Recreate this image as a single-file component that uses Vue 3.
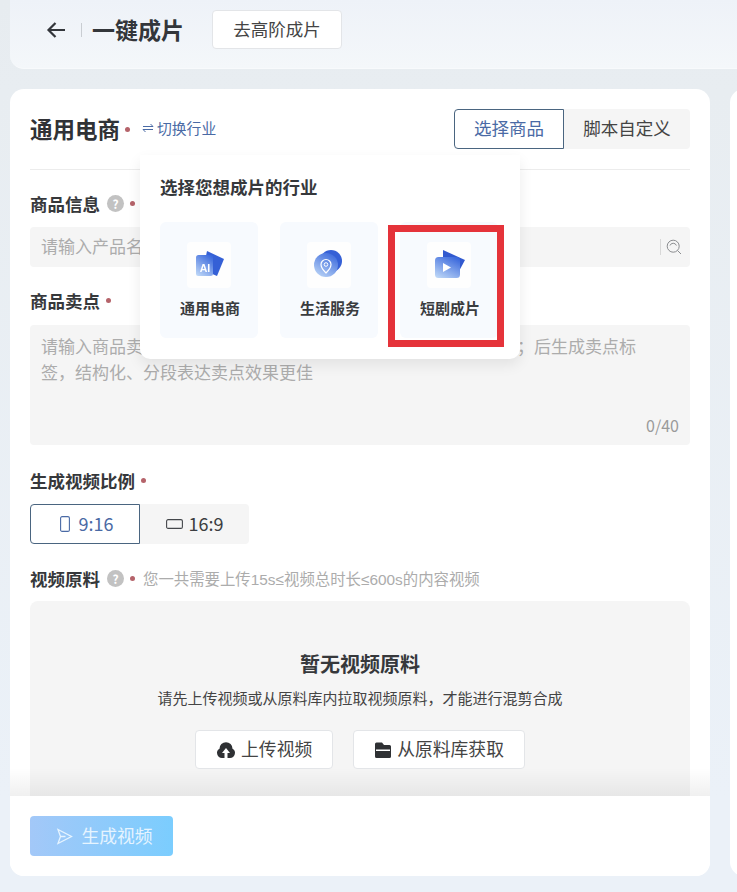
<script setup>
const tiles = [
  { name: '通用电商', type: 'ai' },
  { name: '生活服务', type: 'pin' },
  { name: '短剧成片', type: 'play', marked: true },
]
</script>

<template>
  <div class="page">
    <header class="topbar">
      <svg class="back" width="20" height="18" viewBox="0 0 20 18" fill="none" stroke="#33363b" stroke-width="2.2">
        <path d="M19 9H2.5M9.5 2 2.5 9l7 7" />
      </svg>
      <i class="sep"></i>
      <h1>一键成片</h1>
      <button class="plain-btn">去高阶成片</button>
    </header>

    <main class="columns">
      <section class="card">
        <div class="scroll">
          <div class="card-head">
            <h2>通用电商</h2>
            <i class="dot"></i>
            <span class="switch">
              <svg width="12" height="10" viewBox="0 0 12 10" fill="none" stroke="#4a6aa5" stroke-width="1">
                <path d="M1 3.5h10L8.500 1M11 6.500H1L3.500 9" />
              </svg>
              切换行业
            </span>
            <div class="tabs">
              <span class="tab active">选择商品</span>
              <span class="tab">脚本自定义</span>
            </div>
          </div>

          <div class="label info">
            商品信息
            <i class="help">?</i>
            <i class="dot"></i>
          </div>
          <div class="input">
            <span class="ph">请输入产品名称</span>
            <i class="input-sep"></i>
            <svg width="16" height="16" viewBox="0 0 16 16" fill="none" stroke="#8b8d90" stroke-width="1">
              <circle cx="7.200" cy="7.200" r="6" />
              <path d="M4 6.500a3.400 3.400 0 0 1 6.400 0M11.500 11.500 15 15" />
            </svg>
          </div>

          <div class="label selling">商品卖点<i class="dot"></i></div>
          <div class="textarea">
            <div class="ph">请输入商品卖点，建议每个卖点之间用中文分号隔开，使用分号；后生成卖点标<br />签，结构化、分段表达卖点效果更佳</div>
            <span class="count">0/40</span>
          </div>

          <div class="label ratio-label">生成视频比例<i class="dot"></i></div>
          <div class="ratio">
            <span class="ratio-item active">
              <svg width="10" height="16" viewBox="0 0 10 16" fill="none" stroke="#4a6aa5" stroke-width="1.100">
                <rect x="0.600" y="0.600" width="8.800" height="14.800" rx="1.500" />
              </svg>
              <span class="ratio-text">9:16</span>
            </span>
            <span class="ratio-item">
              <svg width="17" height="10" viewBox="0 0 17 10" fill="none" stroke="#44474b" stroke-width="1.100">
                <rect x="0.600" y="0.600" width="15.800" height="8.800" rx="1.500" />
              </svg>
              <span class="ratio-text">16:9</span>
            </span>
          </div>

          <div class="label material-label">
            视频原料
            <i class="help">?</i>
            <i class="dot"></i>
            <span class="hint">您一共需要上传15s≤视频总时长≤600s的内容视频</span>
          </div>
          <div class="material">
            <h3>暂无视频原料</h3>
            <p>请先上传视频或从原料库内拉取视频原料，才能进行混剪合成</p>
            <div class="material-btns">
              <button class="plain-btn small">
                <svg width="20" height="18" viewBox="0 0 20 18">
                  <path fill="#2f3134" d="M6 17a5 5 0 0 1-2.500-9.300 6.500 6.500 0 0 1 13 0A5 5 0 0 1 14 17h-2.500v-5H14l-4-5-4 5h2.500v5z" />
                </svg>
                <span>上传视频</span>
              </button>
              <button class="plain-btn small">
                <svg width="18" height="18" viewBox="0 0 18 18">
                  <path fill="#2f3134" fill-rule="evenodd" d="M2.500 1.500H8l2 2.500h5.500A1.500 1.500 0 0 1 17 5.500v10a1.500 1.500 0 0 1-1.500 1.500h-13A1.500 1.500 0 0 1 1 15.500V3a1.500 1.500 0 0 1 1.500-1.500zM2 8.500v1.400h14V8.500z" />
                </svg>
                <span>从原料库获取</span>
              </button>
            </div>
          </div>
        </div>

        <footer class="card-foot">
          <button class="submit">
            <svg width="17" height="17" viewBox="0 0 17 17" fill="none" stroke="#e6f4ff" stroke-width="1.300">
              <path d="M2 1.500 15.500 8.500 2 15.500l2.500-7zM4.500 8.500h5" />
            </svg>
            <span>生成视频</span>
          </button>
        </footer>

        <div class="popover">
          <div class="popover-title">选择您想成片的行业</div>
          <div class="tile-grid">
            <div v-for="tile in tiles" :key="tile.name" class="tile" :class="{ marked: tile.marked }">
              <div class="tile-icon">
                <svg width="46" height="46" viewBox="3 2 46 46">
                  <defs>
                    <linearGradient :id="'g-' + tile.type" x1="0.8" y1="0" x2="0.2" y2="1">
                      <stop offset="0" stop-color="#3a68dc" />
                      <stop offset="1" stop-color="#b9d3f6" />
                    </linearGradient>
                  </defs>
                  <template v-if="tile.type === 'ai'">
                    <path fill="#3560d6" d="M24 11 41 19l-7 17-14-6z" />
                    <rect x="13" y="15" width="17" height="21" rx="2.500" :fill="'url(#g-ai)'" />
                    <text x="22" y="31.500" text-anchor="middle" class="ai-text">AI</text>
                  </template>
                  <template v-else-if="tile.type === 'pin'">
                    <circle cx="28" cy="21" r="11" fill="#3560d6" />
                    <circle cx="23" cy="25" r="12" :fill="'url(#g-pin)'" />
                    <path fill="none" stroke="#fff" stroke-width="1.200" d="M23 33c-3-3-5-5.500-5-8.500a5 5 0 0 1 10 0c0 3-2 5.500-5 8.500z" />
                    <circle cx="23" cy="24.500" r="1.800" fill="none" stroke="#fff" stroke-width="1" />
                  </template>
                  <template v-else>
                    <path fill="#3159cf" d="M20 10 42 20l-7 13-15-3z" />
                    <rect x="12" y="17" width="25" height="21" rx="3.500" :fill="'url(#g-play)'" />
                    <path fill="#fff" d="M20 23l8 4.500-8 4.500z" />
                  </template>
                </svg>
              </div>
              <div class="tile-name">{{ tile.name }}</div>
            </div>
          </div>
        </div>
      </section>

      <section class="card side"></section>
    </main>
  </div>
</template>

<style>
html,
body {
  margin: 0;
  overflow: hidden;
  background: #ebf1f8;
}
</style>

<style scoped>
.page {
  width: 737px;
  height: 892px;
  overflow: hidden;
  box-sizing: border-box;
  padding: 0 0 16px 10px;
  display: flex;
  flex-direction: column;
  font-family: "Noto Sans CJK SC", "Noto Sans", sans-serif;
  color: #333;
  background: linear-gradient(180deg, #e7ecf0 0, #e8edf1 90px, #ebf1f8 800px);
}

.topbar {
  height: 69px;
  flex: none;
  width: 760px;
  box-sizing: border-box;
  padding: 0 0 9px 36px;
  display: flex;
  align-items: center;
  border-radius: 0 0 14px 14px;
  background: linear-gradient(180deg, #eef2f8 0, #f4f7fa 100%);
  border-bottom: 1px solid #f8fafc;
}

.back {
  flex: none;
}

.sep {
  width: 1px;
  height: 14px;
  margin: 0 10px 0 15px;
  background: #c9cdd2;
}

h1 {
  margin: 0 0 2px;
  font-size: 23px;
  font-weight: 700;
  color: #33363a;
  line-height: 30px;
}

.plain-btn {
  height: 39px;
  margin-left: 28px;
  width: 130px;
  padding: 0 0 2px;
  border: 1px solid #e3e5e8;
  border-radius: 4px;
  background: #fff;
  font: inherit;
  font-size: 17.500px;
  color: #444;
  display: inline-flex;
  align-items: center;
  justify-content: center;
  gap: 5px;
}

.columns {
  flex: 1;
  margin-top: 20px;
  display: flex;
  gap: 20px;
  min-height: 0;
}

.card {
  position: relative;
  flex: none;
  width: 700px;
  display: flex;
  flex-direction: column;
  border-radius: 14px;
  background: #fff;
}

.side {
  width: 300px;
}

.scroll {
  flex: 1;
  min-height: 0;
  overflow: hidden;
  padding: 20px 20px 0;
  border-radius: 14px 14px 0 0;
}

.card-head {
  display: flex;
  align-items: center;
  height: 40px;
  padding-bottom: 20px;
  border-bottom: 1px solid #ececec;
}

h2 {
  margin: 0 0 3px;
  font-size: 22.500px;
  font-weight: 700;
  color: #303236;
}

.dot {
  display: inline-block;
  width: 5px;
  height: 5px;
  border-radius: 50%;
  background: #b5636a;
  margin-left: 5px;
  flex: none;
}

.switch {
  margin: 0 0 3px 12px;
  color: #4a6aa5;
  font-size: 14.800px;
  display: inline-flex;
  align-items: center;
  gap: 3px;
}

.tabs {
  margin-left: auto;
  display: flex;
  height: 40px;
  background: #f5f5f5;
  border-radius: 4px;
}

.tab {
  width: 126px;
  box-sizing: border-box;
  padding-bottom: 3px;
  display: flex;
  align-items: center;
  justify-content: center;
  font-size: 17.500px;
  color: #444;
}

.tab.active {
  width: 110px;
  color: #4a6aa5;
  background: #fff;
  border: 1px solid #4a6580;
  border-radius: 4px 0 0 4px;
}

.label {
  display: flex;
  align-items: center;
  height: 24px;
  font-size: 17.500px;
  font-weight: 700;
  color: #36383b;
}

.info {
  margin: 21px 0 12px;
}

.selling {
  margin: 21px 0 13px;
}

.ratio-label {
  margin: 23px 0 12px;
}

.material-label {
  margin: 22px 0 11px;
}

.help {
  width: 17px;
  height: 17px;
  margin-left: 7px;
  border-radius: 50%;
  background: #c2c2c2;
  color: #fff;
  font-style: normal;
  font-size: 12px;
  font-weight: 700;
  line-height: 17px;
  text-align: center;
}

.label .dot {
  margin-left: 6px;
}

.hint {
  margin-left: 8px;
  font-family: "Liberation Sans", "Noto Sans CJK SC", sans-serif;
  font-size: 15.400px;
  font-weight: 400;
  color: #acacac;
}

.input {
  height: 40px;
  box-sizing: border-box;
  display: flex;
  align-items: center;
  padding: 0 8px 0 11px;
  border-radius: 4px;
  background: #f5f5f5;
}

.input .ph {
  margin-bottom: 3px;
}

.ph {
  font-size: 17px;
  color: #acacac;
  line-height: 26px;
  white-space: nowrap;
}

.input-sep {
  width: 1px;
  height: 16px;
  margin-left: auto;
  margin-right: 5px;
  background: #d8d8d8;
}

.textarea {
  position: relative;
  height: 120px;
  box-sizing: border-box;
  padding: 8px 11px;
  border-radius: 4px;
  background: #f5f5f5;
}

.count {
  position: absolute;
  right: 11px;
  bottom: 9px;
  font-size: 16px;
  line-height: 22px;
  color: #9a9a9a;
}

.ratio {
  display: flex;
  width: 219px;
  height: 40px;
  border-radius: 4px;
  background: #f5f5f5;
}

.ratio-item {
  flex: 1;
  display: flex;
  align-items: center;
  justify-content: center;
  gap: 6px;
  font-size: 18px;
  color: #3c3e41;
}

.ratio-text {
  margin-bottom: 3px;
}

.ratio-item.active {
  box-sizing: border-box;
  flex: none;
  width: 110px;
  padding-left: 3px;
  gap: 9px;
  color: #4a6aa5;
  background: #fff;
  border: 1px solid #4a6580;
  border-radius: 4px 0 0 4px;
}

.material {
  height: 200px;
  padding-top: 48px;
  box-sizing: border-box;
  border-radius: 8px 8px 0 0;
  background: #f5f5f5;
  text-align: center;
}

h3 {
  margin: 0;
  font-size: 20px;
  font-weight: 700;
  line-height: 30px;
  color: #36383b;
}

p {
  margin: 7px 0 0;
  font-size: 15px;
  line-height: 24px;
  color: #444;
}

.material-btns {
  margin-top: 20px;
  display: flex;
  justify-content: center;
  gap: 20px;
}

.plain-btn.small {
  margin: 0;
  width: auto;
  padding: 0 20px;
  font-size: 17.800px;
}

.plain-btn.small span {
  margin-bottom: 3px;
}

.card-foot {
  flex: none;
  height: 80px;
  box-sizing: border-box;
  padding: 20px;
  border-radius: 0 0 14px 14px;
  background: #fff;
  position: relative;
}

.card-foot::before {
  content: "";
  position: absolute;
  left: 0;
  right: 0;
  bottom: 100%;
  height: 28px;
  background: linear-gradient(180deg, rgba(0, 0, 0, 0), rgba(0, 0, 0, 0.06));
}

.submit {
  width: 143px;
  height: 40px;
  display: flex;
  align-items: center;
  justify-content: center;
  gap: 8px;
  padding: 0 0 0 6px;
  border: 0;
  border-radius: 4px;
  background: linear-gradient(90deg, #a3c8f8, #7bcdfe);
  color: #e6f4ff;
  font: inherit;
  font-size: 17.800px;
}

.submit span {
  margin-bottom: 3px;
}

.popover {
  position: absolute;
  left: 130px;
  top: 66px;
  width: 380px;
  height: 204px;
  box-sizing: border-box;
  padding: 20px;
  border-radius: 0 0 10px 10px;
  background: #fff;
  box-shadow: 0 6px 14px rgba(0, 0, 0, 0.08);
}

.popover-title {
  font-size: 17.500px;
  font-weight: 700;
  line-height: 24px;
  color: #36383b;
}

.tile-grid {
  margin-top: 23px;
  display: grid;
  grid-template-columns: repeat(3, 98px);
  gap: 22px;
}

.tile {
  position: relative;
  height: 116px;
  box-sizing: border-box;
  padding-top: 20px;
  border-radius: 6px;
  background: #f7fafe;
  text-align: center;
}

.tile.marked::after {
  content: "";
  position: absolute;
  left: -12px;
  right: -6px;
  top: 3px;
  bottom: -9px;
  border: 7px solid #e5333a;
}

.tile-icon {
  width: 44px;
  height: 46px;
  margin: 0 auto;
  overflow: hidden;
  background: #fefefe;
  border-radius: 4px;
}

.tile-icon svg {
  display: block;
  margin-left: -1px;
  filter: blur(0.3px);
}

.ai-text {
  fill: #fff;
  font-family: "Liberation Sans", sans-serif;
  font-size: 10.500px;
  font-weight: 700;
}

.tile-name {
  margin-top: 8px;
  padding-left: 2px;
  font-size: 15px;
  font-weight: 700;
  line-height: 24px;
  color: #3a3c3f;
}
</style>
